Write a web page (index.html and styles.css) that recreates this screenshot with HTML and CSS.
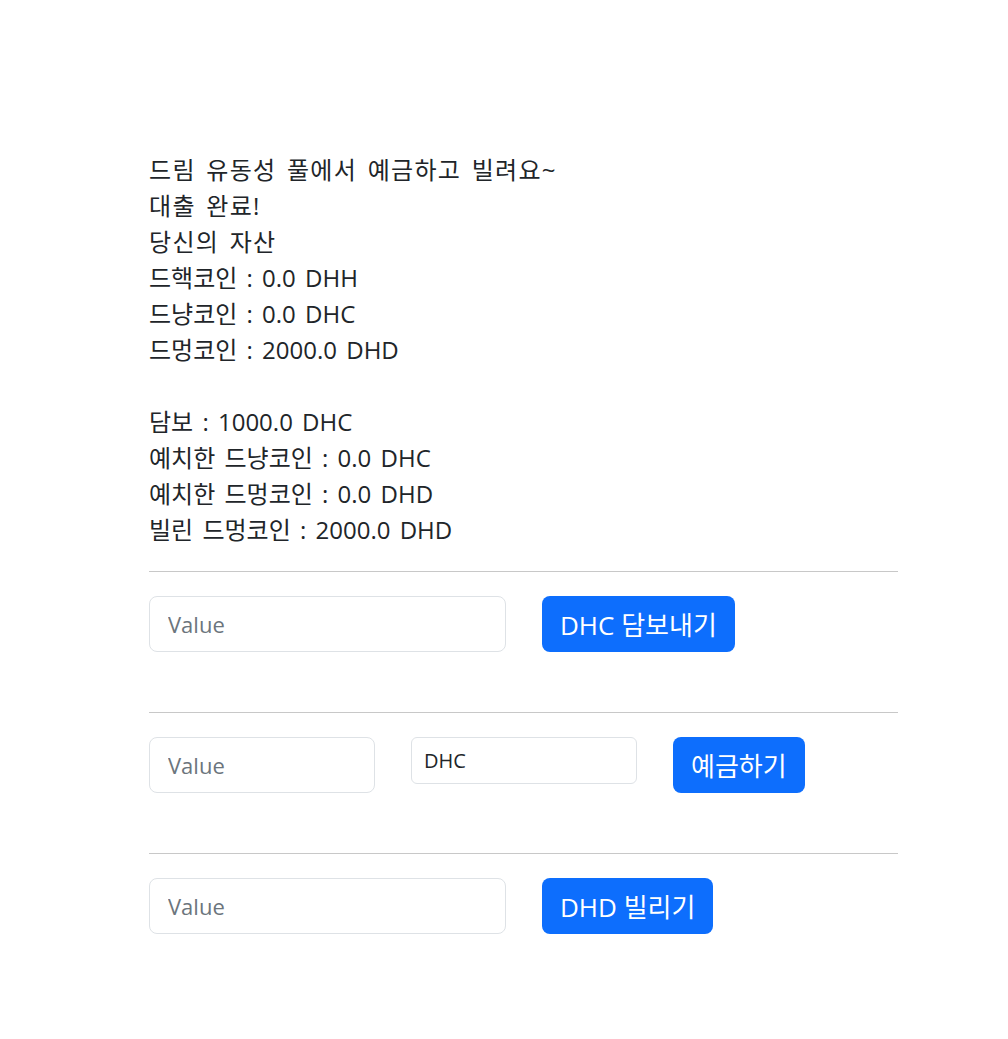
FILE: index.html
```html
<!DOCTYPE html>
<html lang="ko">
<head>
    <meta charset="UTF-8">
    <meta name="viewport" content="width=device-width, initial-scale=1.0">
    <title>드림 유동성 풀</title>
    <link rel="stylesheet" href="styles.css">
</head>
<body>
    <div class="container">
        <div class="info">
            <div class="title">드림 유동성 풀에서 예금하고 빌려요~</div>
            <div class="title">대출 완료!</div>
            <div class="title">당신의 자산</div>
            <div>드핵코인 : 0.0 DHH</div>
            <div>드냥코인 : 0.0 DHC</div>
            <div>드멍코인 : 2000.0 DHD</div>
            <br>
            <div>담보 : 1000.0 DHC</div>
            <div>예치한 드냥코인 : 0.0 DHC</div>
            <div>예치한 드멍코인 : 0.0 DHD</div>
            <div>빌린 드멍코인 : 2000.0 DHD</div>
        </div>

        <hr>
        <div class="row">
            <input class="field" type="text" placeholder="Value">
            <button class="btn">DHC 담보내기</button>
        </div>

        <hr>
        <div class="row">
            <input class="field short" type="text" placeholder="Value">
            <div class="coin-select">DHC</div>
            <button class="btn">예금하기</button>
        </div>

        <hr>
        <div class="row">
            <input class="field" type="text" placeholder="Value">
            <button class="btn">DHD 빌리기</button>
        </div>
    </div>
</body>
</html>
```

FILE: styles.css
```css
body {
    margin: 0;
    font-family: "Open Sans", "Noto Sans CJK KR", sans-serif;
    color: #212529;
    background: #fff;
}

.container {
    width: 749px;
    margin-left: 149px;
    padding-top: 152px;
}

.info {
    font-size: 24px;
    line-height: 36px;
    word-spacing: 3px;
}

.info .title {
    letter-spacing: 1.3px;
}

.info br {
    display: block;
    content: "";
    height: 35px;
}

hr {
    border: none;
    border-top: 1px solid #c8c8c8;
    margin: 23px 0 24px;
}

hr ~ hr {
    margin-top: 60px;
}

.row {
    display: flex;
    align-items: flex-start;
    gap: 36px;
}

.field {
    box-sizing: border-box;
    width: 357px;
    height: 56px;
    padding: 8px 18px;
    font-family: inherit;
    font-size: 22px;
    border: 1px solid #dee2e6;
    border-radius: 8px;
    outline: none;
}

.field::placeholder {
    color: #6c757d;
}

.field.short {
    width: 226px;
}

.coin-select {
    box-sizing: border-box;
    width: 226px;
    height: 47px;
    padding: 9px 12px;
    font-size: 20px;
    line-height: 28px;
    border: 1px solid #dee2e6;
    border-radius: 6px;
}

.btn {
    height: 56px;
    padding: 0 18px;
    font-family: inherit;
    font-size: 26px;
    color: #fff;
    background-color: #0d6efd;
    border: none;
    border-radius: 8px;
    cursor: pointer;
}
```
